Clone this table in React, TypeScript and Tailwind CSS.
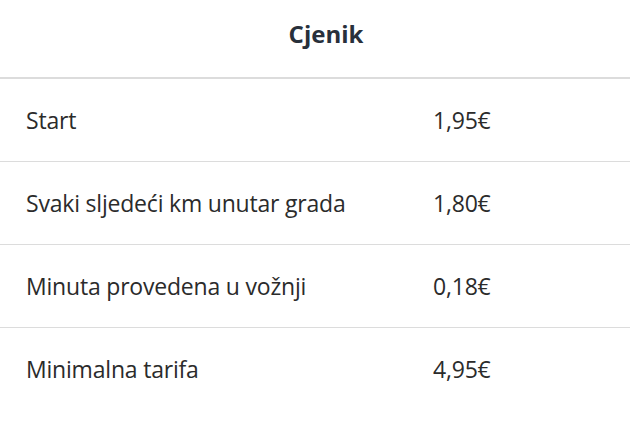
const rows = [
  { label: "Start", price: "1,95€" },
  { label: "Svaki sljedeći km unutar grada", price: "1,80€" },
  { label: "Minuta provedena u vožnji", price: "0,18€" },
  { label: "Minimalna tarifa", price: "4,95€" },
];

const App = () => {
  return (
    <div className="w-[630px] h-[443px] bg-white font-['Open_Sans',sans-serif] text-[#2b2b2b]">
      {/* Naslov */}
      <div className="h-[79px] flex items-center justify-center border-b-2 border-[#dcdcdc] pl-[22px] pb-[9px]">
        <h2 className="text-2xl font-bold text-[#28303b]">Cjenik</h2>
      </div>

      {/* Tablica */}
      <div>
        {rows.map((row, i) => (
          <div
            key={row.label}
            className={`h-[83px] grid grid-cols-[407px_1fr] items-center pl-[26px] text-[23px] tracking-[-0.2px] ${
              i < rows.length - 1 ? "border-b border-[#dcdcdc]" : ""
            }`}
          >
            <span>{row.label}</span>
            <span>{row.price}</span>
          </div>
        ))}
      </div>
    </div>
  );
};

export default App;
